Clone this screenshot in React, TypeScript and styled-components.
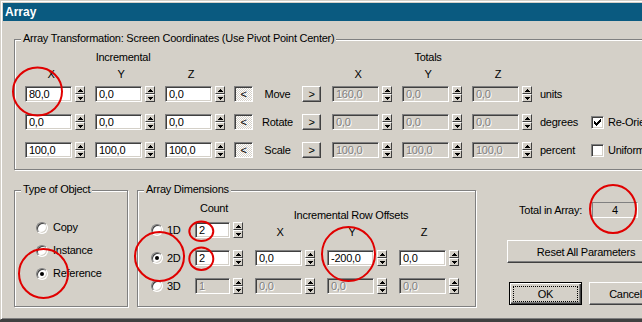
import React from 'react';
import styled, { createGlobalStyle, css } from 'styled-components';

const FACE = '#D4D0C8';

const Global = createGlobalStyle`
  html, body { margin: 0; padding: 0; overflow: hidden; background: #404040; }
  body { font-family: 'Liberation Sans', Arial, sans-serif; font-size: 11px; }
`;

const Screen = styled.div`
  position: relative;
  width: 642px;
  height: 322px;
  overflow: hidden;
`;

const Window = styled.div`
  width: 700px;
  height: 320px;
  box-sizing: border-box;
  background: ${FACE};
  border: 1px solid;
  border-color: ${FACE} #404040 #404040 ${FACE};
  box-shadow: inset 1px 1px #fff, inset -1px -1px #808080;
  padding: 2px;
  font-family: 'Liberation Sans', Arial, sans-serif;
  font-size: 11px;
  letter-spacing: -0.25px;
  color: #000;
`;

const TitleBar = styled.div`
  height: 18px;
  background: #0a5a80;
  color: #fff;
  font-weight: bold;
  font-size: 12px;
  letter-spacing: 0;
  line-height: 18px;
  padding-left: 2px;
`;

const Body = styled.div`
  padding: 18px 0 0 11px;
`;

const Group = styled.div<{ $w: number; $h?: number; $ml?: number }>`
  position: relative;
  box-sizing: border-box;
  width: ${(p) => p.$w}px;
  ${(p) => (p.$h ? `height: ${p.$h}px;` : '')}
  margin-left: ${(p) => p.$ml ?? 0}px;
  border: 1px solid #808080;
  box-shadow: inset 1px 1px #fff, 1px 1px #fff;
`;

const Legend = styled.span`
  position: absolute;
  top: -8px;
  left: 6px;
  padding: 0 2px;
  background: ${FACE};
  line-height: 13px;
  white-space: nowrap;
`;

const TransformContent = styled.div`
  padding: 11px 0 11px 10px;
`;

const HeadRow = styled.div<{ $mt?: number }>`
  display: flex;
  height: 13px;
  line-height: 13px;
  margin-top: ${(p) => p.$mt ?? 0}px;
`;

const HeadSpan = styled.div<{ $w: number; $ml?: number; $pr?: number }>`
  box-sizing: border-box;
  width: ${(p) => p.$w}px;
  margin-left: ${(p) => p.$ml ?? 0}px;
  padding-right: ${(p) => p.$pr ?? 0}px;
  text-align: center;
  white-space: nowrap;
`;

const Triple = styled.div<{ $ml?: number }>`
  display: flex;
  gap: 10px;
  width: 200px;
  margin-left: ${(p) => p.$ml ?? 0}px;
`;

const Row = styled.div<{ $mt?: number }>`
  display: flex;
  align-items: center;
  height: 16px;
  margin-top: ${(p) => p.$mt ?? 0}px;
`;

const FieldWrap = styled.div`
  display: flex;
  gap: 3px;
  align-items: flex-start;
`;

const TextBox = styled.div<{ $w: number; $disabled?: boolean }>`
  box-sizing: border-box;
  width: ${(p) => p.$w}px;
  height: 16px;
  border: 1px solid;
  border-color: #808080 #fff #fff #808080;
  box-shadow: inset 1px 1px #404040, inset -1px -1px ${FACE};
  padding-left: 3px;
  line-height: 14px;
  white-space: nowrap;
  overflow: hidden;
  ${(p) =>
    p.$disabled
      ? css`
          background: ${FACE};
          color: #808080;
          text-shadow: 1px 1px #fff;
        `
      : css`
          background: #fff;
          color: #000;
        `}
`;

const SpinBox = styled.div`
  display: flex;
  flex-direction: column;
  width: 10px;
  height: 16px;
`;

const SpinHalf = styled.div`
  flex: 1;
  box-sizing: border-box;
  border: 1px solid;
  border-color: #fff #404040 #404040 #fff;
  background: ${FACE};
  display: flex;
  align-items: center;
  justify-content: center;
  svg { display: block; }
`;

const Arrow = ({ down }: { down?: boolean }) => (
  <svg width="5" height="3" viewBox="0 0 5 3" shapeRendering="crispEdges">
    <path
      fill="#000"
      d={down ? 'M0 0h5v1H0zM1 1h3v1H1zM2 2h1v1H2z' : 'M2 0h1v1H2zM1 1h3v1H1zM0 2h5v1H0z'}
    />
  </svg>
);

const Spinner = () => (
  <SpinBox>
    <SpinHalf>
      <Arrow />
    </SpinHalf>
    <SpinHalf>
      <Arrow down />
    </SpinHalf>
  </SpinBox>
);

const Field = ({ value, w = 47, disabled }: { value: string; w?: number; disabled?: boolean }) => (
  <FieldWrap>
    <TextBox $w={w} $disabled={disabled}>
      {value}
    </TextBox>
    <Spinner />
  </FieldWrap>
);

const ArrowButton = styled.div<{ $pressed?: boolean; $ml?: number }>`
  box-sizing: border-box;
  width: 19px;
  height: 16px;
  margin-left: ${(p) => p.$ml ?? 0}px;
  border: 1px solid;
  display: flex;
  align-items: center;
  justify-content: center;
  line-height: 14px;
  ${(p) =>
    p.$pressed
      ? css`
          border-color: #808080 #fff #fff #808080;
          box-shadow: inset 1px 1px #404040;
          background: repeating-conic-gradient(#fff 0 25%, ${FACE} 0 50%) 0 0 / 2px 2px;
        `
      : css`
          border-color: #fff #404040 #404040 #fff;
          box-shadow: inset -1px -1px #808080;
          background: ${FACE};
        `}
`;

const OpLabel = styled.div`
  width: 49px;
  text-align: center;
  line-height: 16px;
`;

const UnitLabel = styled.div<{ $ml?: number }>`
  width: 51px;
  margin-left: ${(p) => p.$ml ?? 0}px;
  line-height: 16px;
  white-space: nowrap;
`;

const CheckRow = styled.div`
  display: flex;
  align-items: center;
  gap: 4px;
  white-space: nowrap;
`;

const CheckBox = styled.div`
  box-sizing: border-box;
  width: 13px;
  height: 13px;
  border: 1px solid;
  border-color: #808080 #fff #fff #808080;
  box-shadow: inset 1px 1px #404040, inset -1px -1px ${FACE};
  background: #fff;
  display: flex;
  align-items: center;
  justify-content: center;
  svg { display: block; }
`;

const Check = () => (
  <svg width="7" height="7" viewBox="0 0 7 7" shapeRendering="crispEdges">
    <path fill="#000" d="M6 0h1v3H6zM5 1h1v3H5zM4 2h1v3H4zM3 3h1v3H3zM2 4h1v3H2zM1 3h1v3H1zM0 2h1v3H0z" />
  </svg>
);

const Bottom = styled.div`
  display: flex;
  align-items: flex-start;
  margin-top: 20px;
`;

const TypeContent = styled.div`
  display: flex;
  flex-direction: column;
  gap: 10px;
  padding: 30px 0 0 21px;
`;

const RadioRow = styled.div<{ $gap?: number }>`
  display: flex;
  align-items: center;
  gap: ${(p) => p.$gap ?? 5}px;
  height: 13px;
  line-height: 13px;
  white-space: nowrap;
`;

const Radio = styled.div<{ $on?: boolean }>`
  position: relative;
  box-sizing: border-box;
  width: 12px;
  height: 12px;
  border-radius: 50%;
  border: 1px solid;
  border-color: #808080 #fff #fff #808080;
  box-shadow: inset 1px 1px #404040, inset -1px -1px ${FACE};
  background: #fff;
  display: flex;
  align-items: center;
  justify-content: center;
  &::after {
    content: '';
    width: 4px;
    height: 4px;
    border-radius: 50%;
    background: ${(p) => (p.$on ? '#000' : 'transparent')};
  }
`;

const DimContent = styled.div`
  padding: 11px 0 0 13px;
`;

const DimGrid = styled.div<{ $rows?: string }>`
  display: grid;
  grid-template-columns: 32px 48px 60px 60px 60px;
  grid-auto-rows: ${(p) => p.$rows ?? '16px'};
  column-gap: 12px;
  row-gap: 12px;
  align-items: center;
`;

const DimHead = styled.div<{ $col: string; $align: string; $pr: number }>`
  grid-column: ${(p) => p.$col};
  align-self: ${(p) => p.$align};
  box-sizing: border-box;
  padding-right: ${(p) => p.$pr}px;
  text-align: center;
  line-height: 13px;
  white-space: nowrap;
`;

const AxisCell = styled.div`
  align-self: stretch;
  box-sizing: border-box;
  padding: 4px 10px 0 0;
  text-align: center;
  line-height: 13px;
`;

const RightCol = styled.div`
  display: flex;
  flex-direction: column;
  width: 158px;
  margin-left: 31px;
  padding-top: 12px;
`;

const TotalRow = styled.div`
  display: flex;
  align-items: center;
  height: 16px;
`;

const TotalLabel = styled.div`
  width: 75px;
  text-align: right;
  white-space: nowrap;
`;

const TotalBox = styled.div`
  box-sizing: border-box;
  width: 46px;
  height: 16px;
  margin-left: 10px;
  border: 1px solid;
  border-color: #808080 #fff #fff #808080;
  text-align: center;
  line-height: 14px;
`;

const Button = styled.div<{ $w: number; $mt?: number; $default?: boolean }>`
  box-sizing: border-box;
  width: ${(p) => p.$w}px;
  height: 23px;
  margin-top: ${(p) => p.$mt ?? 0}px;
  border: 1px solid;
  display: flex;
  align-items: stretch;
  background: ${FACE};
  ${(p) =>
    p.$default
      ? css`
          border-color: #000;
          box-shadow: inset 1px 1px #fff, inset -1px -1px #404040, inset -2px -2px #808080;
          padding: 3px 3px 2px 3px;
        `
      : css`
          border-color: #fff #404040 #404040 #fff;
          box-shadow: inset -1px -1px #808080;
          padding: 0;
        `}
`;

const ButtonFace = styled.div<{ $focus?: boolean }>`
  flex: 1;
  display: flex;
  align-items: center;
  justify-content: center;
  white-space: nowrap;
  box-sizing: border-box;
  border: 1px ${(p) => (p.$focus ? 'dotted #000' : 'solid transparent')};
`;

const ButtonRow = styled.div`
  display: flex;
  gap: 7px;
  margin-top: 19px;
  padding-left: 2px;
`;

const Marks = styled.svg`
  position: absolute;
  left: 0;
  top: 0;
  pointer-events: none;
`;

const transformRows = [
  { op: 'Move', unit: 'units', inc: ['80,0', '0,0', '0,0'], tot: ['160,0', '0,0', '0,0'], check: null as null | { label: string; on: boolean } },
  { op: 'Rotate', unit: 'degrees', inc: ['0,0', '0,0', '0,0'], tot: ['0,0', '0,0', '0,0'], check: { label: 'Re-Orient', on: true } },
  { op: 'Scale', unit: 'percent', inc: ['100,0', '100,0', '100,0'], tot: ['100,0', '100,0', '100,0'], check: { label: 'Uniform', on: false } },
];

const axes = ['X', 'Y', 'Z'];

export default function App() {
  return (
    <Screen>
      <Global />
      <Window>
        <TitleBar>Array</TitleBar>
        <Body>
          <Group $w={690}>
            <Legend>Array Transformation: Screen Coordinates (Use Pivot Point Center)</Legend>
            <TransformContent>
              <HeadRow>
                <HeadSpan $w={200} $pr={4}>Incremental</HeadSpan>
                <HeadSpan $w={200} $ml={107} $pr={8}>Totals</HeadSpan>
              </HeadRow>
              <HeadRow $mt={4}>
                <Triple>
                  {axes.map((a) => (
                    <HeadSpan key={a} $w={60} $pr={8}>{a}</HeadSpan>
                  ))}
                </Triple>
                <Triple $ml={107}>
                  {axes.map((a) => (
                    <HeadSpan key={a} $w={60} $pr={8}>{a}</HeadSpan>
                  ))}
                </Triple>
              </HeadRow>
              {transformRows.map((r, i) => (
                <Row key={r.op} $mt={i === 0 ? 5 : 12}>
                  <Triple>
                    {r.inc.map((v, j) => (
                      <Field key={j} value={v} />
                    ))}
                  </Triple>
                  <ArrowButton $pressed $ml={9}>&lt;</ArrowButton>
                  <OpLabel>{r.op}</OpLabel>
                  <ArrowButton>&gt;</ArrowButton>
                  <Triple $ml={11}>
                    {r.tot.map((v, j) => (
                      <Field key={j} value={v} disabled />
                    ))}
                  </Triple>
                  <UnitLabel $ml={8}>{r.unit}</UnitLabel>
                  {r.check && (
                    <CheckRow>
                      <CheckBox>{r.check.on && <Check />}</CheckBox>
                      {r.check.label}
                    </CheckRow>
                  )}
                </Row>
              ))}
            </TransformContent>
          </Group>

          <Bottom>
            <Group $w={114} $h={117}>
              <Legend>Type of Object</Legend>
              <TypeContent>
                <RadioRow>
                  <Radio />
                  Copy
                </RadioRow>
                <RadioRow>
                  <Radio />
                  Instance
                </RadioRow>
                <RadioRow>
                  <Radio $on />
                  Reference
                </RadioRow>
              </TypeContent>
            </Group>

            <Group $w={339} $h={117} $ml={9}>
              <Legend>Array Dimensions</Legend>
              <DimContent>
                <DimGrid $rows="20px">
                  <DimHead $col="2" $align="start" $pr={10}>Count</DimHead>
                  <DimHead $col="3 / span 3" $align="end" $pr={12}>Incremental Row Offsets</DimHead>
                </DimGrid>
                <DimGrid>
                  <RadioRow $gap={4}>
                    <Radio />
                    1D
                  </RadioRow>
                  <Field value="2" w={35} />
                  {axes.map((a) => (
                    <AxisCell key={a}>{a}</AxisCell>
                  ))}

                  <RadioRow $gap={4}>
                    <Radio $on />
                    2D
                  </RadioRow>
                  <Field value="2" w={35} />
                  <Field value="0,0" />
                  <Field value="-200,0" />
                  <Field value="0,0" />

                  <RadioRow $gap={4}>
                    <Radio />
                    3D
                  </RadioRow>
                  <Field value="1" w={35} disabled />
                  <Field value="0,0" disabled />
                  <Field value="0,0" disabled />
                  <Field value="0,0" disabled />
                </DimGrid>
              </DimContent>
            </Group>

            <RightCol>
              <TotalRow>
                <TotalLabel>Total in Array:</TotalLabel>
                <TotalBox>4</TotalBox>
              </TotalRow>
              <Button $w={158} $mt={22}>
                <ButtonFace>Reset All Parameters</ButtonFace>
              </Button>
              <ButtonRow>
                <Button $w={73} $default>
                  <ButtonFace $focus>OK</ButtonFace>
                </Button>
                <Button $w={73}>
                  <ButtonFace>Cancel</ButtonFace>
                </Button>
              </ButtonRow>
            </RightCol>
          </Bottom>
        </Body>
      </Window>

      <Marks width="642" height="322" viewBox="0 0 642 322" fill="none" stroke="#e00000" strokeWidth="2">
        <ellipse cx="37.5" cy="91.5" rx="24.5" ry="24" />
        <ellipse cx="43.5" cy="273.5" rx="24.5" ry="24.5" />
        <ellipse cx="159.5" cy="256.5" rx="24.5" ry="24.5" />
        <ellipse cx="201.3" cy="231.3" rx="12" ry="9.7" />
        <ellipse cx="201.3" cy="258.7" rx="12" ry="11.3" />
        <ellipse cx="348.5" cy="254" rx="26.5" ry="27" />
        <ellipse cx="613" cy="209" rx="23" ry="24" />
      </Marks>
    </Screen>
  );
}
